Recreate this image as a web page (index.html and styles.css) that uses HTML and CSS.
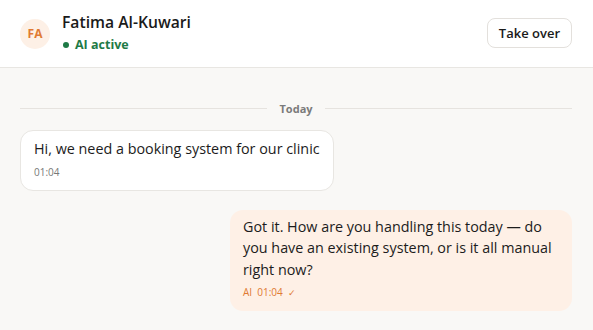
FILE: index.html
```html
<!DOCTYPE html>
<html>
<head>
<meta charset="utf-8">
<link rel="stylesheet" href="styles.css">
</head>
<body>
<div class="chat">
  <header class="head">
    <div class="who">
      <div class="avatar">FA</div>
      <div class="info">
        <div class="name">Fatima Al-Kuwari</div>
        <div class="status"><span class="dot"></span>AI active</div>
      </div>
    </div>
    <button class="take">Take over</button>
  </header>
  <main class="thread">
    <div class="day"><span class="line"></span><span class="day-label">Today</span><span class="line"></span></div>
    <div class="msg in">
      <div class="text">Hi, we need a booking system for our clinic</div>
      <div class="meta">01:04</div>
    </div>
    <div class="msg out">
      <div class="text">Got it. How are you handling this today — do you have an existing system, or is it all manual right now?</div>
      <div class="meta">AI&nbsp; 01:04 &nbsp;<span class="tick">✓</span></div>
    </div>
  </main>
</div>
</body>
</html>
```
FILE: styles.css
```css
* { box-sizing: border-box; }
html, body { margin: 0; padding: 0; }
body {
  width: 593px;
  height: 330px;
  overflow: hidden;
  font-family: "Open Sans", "Noto Sans", sans-serif;
  background: #f9f8f6;
  color: #1c1c1c;
}
.chat { display: flex; flex-direction: column; height: 330px; }
.head {
  height: 68px;
  background: #ffffff;
  border-bottom: 1px solid #e8e6e2;
  display: flex;
  align-items: center;
  justify-content: space-between;
  padding: 0 21px 0 20px;
}
.who { display: flex; align-items: center; gap: 12px; }
.avatar {
  width: 30px; height: 30px;
  border-radius: 50%;
  background: #fdf0e6;
  color: #e07a33;
  font-size: 12px;
  font-weight: 700;
  display: flex; align-items: center; justify-content: center;
}
.info { display: flex; flex-direction: column; gap: 4px; margin-top: -1px; }
.name { font-size: 15.7px; font-weight: 600; color: #1a1a1a; line-height: 20px; }
.status {
  display: flex; align-items: center; gap: 6px;
  font-size: 12.5px; font-weight: 700; color: #1e7a46;
  line-height: 18px;
}
.dot { width: 6px; height: 6px; border-radius: 50%; background: #1e7a46; margin-left: 1px; }
.take {
  font-family: inherit;
  font-size: 13px;
  font-weight: 600;
  color: #1a1a1a;
  background: #ffffff;
  border: 1px solid #e3e0dc;
  border-radius: 8px;
  height: 30px;
  padding: 0 11px;
  margin-top: -2px;
}
.thread {
  flex: 1;
  padding: 31px 21px 0 20px;
  display: flex;
  flex-direction: column;
}
.day { display: flex; align-items: center; gap: 12px; height: 18px; }
.line { flex: 1; height: 1px; background: #e6e3df; }
.day-label { font-size: 11px; font-weight: 700; color: #7b7b7b; }
.msg { border-radius: 13px; }
.msg .text { font-size: 14.35px; line-height: 21.5px; }
.msg .meta { font-size: 10px; line-height: 14px; margin-top: 5px; }
.in {
  align-self: flex-start;
  margin-top: 13px;
  background: #ffffff;
  border: 1px solid #e8e6e2;
  padding: 7px 13px 11px 13px;
}
.in .meta { color: #777; }
.out {
  align-self: flex-end;
  width: 342px;
  margin-top: 19px;
  background: #fef0e6;
  padding: 6px 14px 11px 13px;
}
.out .meta { color: #e07a33; }
.tick { font-size: 9px; }
```
